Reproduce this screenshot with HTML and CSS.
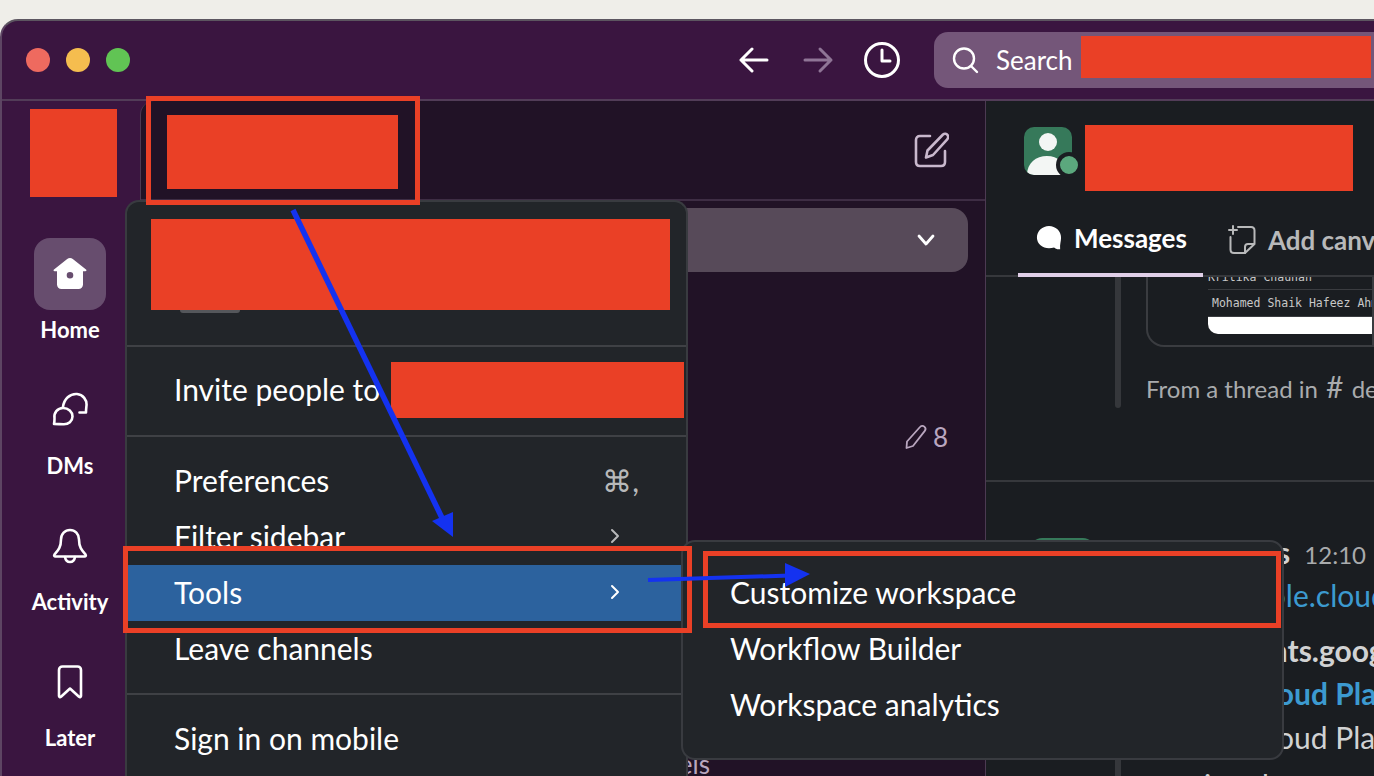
FILE: index.html

```html
<!DOCTYPE html>
<html lang="en">
<head>
  <meta charset="UTF-8">
  <title>Slack</title>
  <link rel="stylesheet" href="styles.css">
</head>
<body>

<div class="window">

  <header class="titlebar">
    <div class="lights">
      <span class="light red"></span>
      <span class="light yellow"></span>
      <span class="light green"></span>
    </div>
    <nav class="history">
      <svg width="32" height="32" viewBox="0 0 32 32" fill="none" stroke="#fff" stroke-width="3" stroke-linecap="round" stroke-linejoin="round"><path d="M3 16h26M14 5 3 16l11 11"/></svg>
      <svg width="32" height="32" viewBox="0 0 32 32" fill="none" stroke="#8f7596" stroke-width="3" stroke-linecap="round" stroke-linejoin="round"><path d="M3 16h26M18 5l11 11-11 11"/></svg>
      <svg class="clock" width="36" height="36" viewBox="0 0 36 36" fill="none" stroke="#fff" stroke-width="3" stroke-linecap="round" stroke-linejoin="round"><circle cx="18" cy="18" r="16.5"/><path d="M18 8v11h8"/></svg>
    </nav>
    <div class="search">
      <svg width="28" height="28" viewBox="0 0 28 28" fill="none" stroke="#fff" stroke-width="2.4" stroke-linecap="round"><circle cx="13" cy="12.5" r="10"/><path d="m20 20 6 6"/></svg>
      <span class="search-label">Search</span>
      <div class="redact search-redact"></div>
    </div>
  </header>

  <div class="content">

    <aside class="rail">
      <div class="redact rail-logo"></div>
      <div class="rail-item">
        <div class="rail-icon active">
          <svg width="36" height="36" viewBox="0 0 36 36"><path fill="#fff" fill-rule="evenodd" d="M18 2c1 0 2 .4 2.800 1L34 13.500c.9.700.4 1.800-.7 1.800H31v13.200c0 2.600-1.900 4.500-4.500 4.500h-17C6.900 33 5 31.100 5 28.500V15.300H2.700c-1.100 0-1.600-1.100-.7-1.800L15.200 3c.8-.6 1.800-1 2.800-1Zm0 14a3.300 3.300 0 1 0 0 6.600 3.300 3.300 0 0 0 0-6.600Z"/></svg>
        </div>
        <span class="rail-label">Home</span>
      </div>
      <div class="rail-item">
        <div class="rail-icon">
          <svg width="36" height="36" viewBox="0 0 36 36" fill="none" stroke="#fff" stroke-width="2.600" stroke-linecap="round" stroke-linejoin="round"><path d="M11 15C12 7 18 1.500 25 2c6 .5 10 6 9.500 11.500-.2 2-.5 4-.5 7h-6.500"/><path d="M2 32c.5-2 .5-3.500.5-5.500C1.500 21 5.500 16 11 16s9.500 4 9.500 8.500-4 8-9 7.800c-3 0-6-.3-9.500-.3Z"/></svg>
        </div>
        <span class="rail-label">DMs</span>
      </div>
      <div class="rail-item">
        <div class="rail-icon">
          <svg width="36" height="36" viewBox="0 0 36 36" fill="none" stroke="#fff" stroke-width="2.600" stroke-linecap="round" stroke-linejoin="round"><path d="M18 2c-5 0-9 4-9 9.500 0 8-3 11-6.500 15-.8 1-.2 2 1 2h29c1.200 0 1.800-1 1-2C30 22.500 27 19.500 27 11.500 27 6 23 2 18 2Z"/><path d="M13 29c.5 3 2.500 5 5 5s4.500-2 5-5"/></svg>
        </div>
        <span class="rail-label">Activity</span>
      </div>
      <div class="rail-item">
        <div class="rail-icon">
          <svg width="36" height="36" viewBox="0 0 36 36" fill="none" stroke="#fff" stroke-width="2.600" stroke-linecap="round" stroke-linejoin="round"><path d="M7 6c0-2 1.500-3.500 3.500-3.500h15C27.500 2.500 29 4 29 6v26c0 1-1 1.500-2 .8L18 24.500 9 32.800c-1 .7-2 .2-2-.8V6Z"/></svg>
        </div>
        <span class="rail-label">Later</span>
      </div>
    </aside>

    <section class="sidebar">
      <div class="side-head">
        <svg width="36" height="36" viewBox="0 0 36 36" fill="none" stroke="#c9b8cd" stroke-width="2.600" stroke-linecap="round" stroke-linejoin="round"><path d="M17 4H7C4.500 4 3 5.500 3 8v22c0 2.500 1.500 4 4 4h21c2.500 0 4-1.500 4-4V19"/><path d="M30 2.500c1.500-1.200 3.500-.8 4.500.6s.8 3-.3 4.200L20 23l-7 2.500 1.500-7L30 2.500Z"/></svg>
      </div>
      <div class="side-pill">
        <svg width="18" height="12" viewBox="0 0 18 12" fill="none" stroke="#fff" stroke-width="2.800" stroke-linecap="round" stroke-linejoin="round"><path d="m2 2 7 8 7-8"/></svg>
      </div>
      <div class="draft-row">
        <svg width="26" height="26" viewBox="0 0 26 26" fill="none" stroke="#b9a6bf" stroke-width="1.800" stroke-linecap="round" stroke-linejoin="round"><path d="M17 3c1-1.300 3-1.500 4.300-.4s1.500 3 .5 4.300L10 22l-6.500 2L4 17.500 17 3Z"/></svg>
        <span>8</span>
      </div>
      <div class="side-foot">All channels</div>
    </section>

    <main class="channel">
      <div class="channel-head">
        <div class="channel-avatar">
          <svg width="48" height="48" viewBox="0 0 48 48"><circle cx="24" cy="15" r="9" fill="#f3f6f4"/><path fill="#f3f6f4" d="M3 48c0-12 9-19 20-19s18 7 20 19Z"/></svg>
          <span class="status"></span>
        </div>
        <div class="redact channel-redact"></div>
      </div>
      <div class="tabs">
        <div class="tab on">
          <svg width="26" height="28" viewBox="0 0 28 28"><path fill="#fff" d="M14 1c7 0 13 5.500 13 12.500 0 4-1.500 7.500-1 12.500-3 .5-5-.6-6.500-1.800-1.700.6-3.500.8-5.500.8-7 0-13-4.500-13-11.500S7 1 14 1Z"/></svg>
          Messages
        </div>
        <div class="tab">
          <svg width="28" height="30" viewBox="0 0 28 30" fill="none" stroke="#b8b9ba" stroke-width="2" stroke-linecap="round" stroke-linejoin="round"><path d="M10 2h13c2 0 3.500 1.500 3.500 3.500V19L17 28H6c-2 0-3.500-1.500-3.500-3.500V12"/><path d="M26 19h-6c-2 0-3 1-3 3v6M5 1v8M1 5h8"/></svg>
          Add canvas
        </div>
      </div>

      <div class="thread">
        <div class="file-card">
          <div class="sheet">
            <div class="sheet-row first">Kritika Chauhan</div>
            <div class="sheet-row">Mohamed Shaik Hafeez Ahmed</div>
            <div class="sheet-end"></div>
          </div>
        </div>
        <p class="thread-from">From a thread in <span class="hash">#</span> dev</p>
      </div>

      <div class="message">
        <div class="msg-side">
          <div class="msg-avatar"></div>
          <div class="msg-bar"></div>
        </div>
        <div class="msg-body">
          <p class="msg-line m-name"><b>s</b> <span class="time">12:10</span></p>
          <p class="msg-line m-link">console.cloud.google.com</p>
          <p class="msg-line m-bold">accounts.google.com</p>
          <p class="msg-line m-title">Google Cloud Platform</p>
          <p class="msg-line m-plain">Google Cloud Platform</p>
          <p class="msg-line m-last">ing th</p>
        </div>
      </div>
    </main>

  </div>

  <!-- workspace menu -->
  <div class="menu main-menu">
    <div class="menu-top">
      <div class="redact top-redact"></div>
      <div class="top-chip"></div>
    </div>
    <div class="menu-group invite">
      <div class="menu-row">Invite people to</div>
      <div class="redact invite-redact"></div>
    </div>
    <div class="menu-group">
      <div class="menu-row">Preferences <span class="hint">⌘,</span></div>
      <div class="menu-row">Filter sidebar <svg class="caret" width="10" height="16" viewBox="0 0 10 16" fill="none" stroke="#b8b9ba" stroke-width="2" stroke-linecap="round" stroke-linejoin="round"><path d="m2 2 6 6-6 6"/></svg></div>
      <div class="menu-row selected">Tools <svg class="caret" width="10" height="16" viewBox="0 0 10 16" fill="none" stroke="#fff" stroke-width="2" stroke-linecap="round" stroke-linejoin="round"><path d="m2 2 6 6-6 6"/></svg></div>
      <div class="menu-row">Leave channels</div>
    </div>
    <div class="menu-group last">
      <div class="menu-row">Sign in on mobile</div>
    </div>
  </div>

  <!-- tools submenu -->
  <div class="menu sub-menu">
    <div class="menu-row">Customize workspace</div>
    <div class="menu-row">Workflow Builder</div>
    <div class="menu-row">Workspace analytics</div>
  </div>

  <!-- annotations drawn on the screenshot -->
  <div class="mark mark-head"><div class="redact head-redact"></div></div>
  <div class="mark mark-tools"></div>
  <div class="mark mark-custom"></div>
  <svg class="arrows" width="1374" height="776" viewBox="0 0 1374 776">
    <path d="M293 210 444 522" fill="none" stroke="#1432f0" stroke-width="5.500"/>
    <path d="M453 537 432 521 453 512Z" fill="#1432f0"/>
    <path d="M648 580 790 575.500" fill="none" stroke="#1432f0" stroke-width="4"/>
    <path d="M810 574 785 563 785 587Z" fill="#1432f0"/>
  </svg>
</div>

</body>
</html>
```

FILE: styles.css

```css
html, body { margin: 0; height: 776px; overflow: hidden; }
body { background: #efeee9; font-family: "Lato", "Open Sans", sans-serif; padding-top: 19px; box-sizing: border-box; }
p { margin: 0; }
.redact { background: #ea4026; }

.window { height: 757px; background: #3a1540; border-top: 2px solid #5c5560; border-left: 2px solid #5d4563; border-top-left-radius: 18px; overflow: hidden; display: flex; flex-direction: column; }

/* title bar */
.titlebar { height: 78px; flex: none; display: flex; align-items: center; border-bottom: 2px solid #523c58; box-sizing: content-box; }
.lights { display: flex; gap: 16px; margin-left: 24px; }
.light { width: 24px; height: 24px; border-radius: 50%; }
.light.red { background: #ee6a5f; }
.light.yellow { background: #f5bd4f; }
.light.green { background: #61c454; }
.history { display: flex; align-items: center; gap: 32px; margin-left: 608px; }
.clock { margin-left: -2px; }
.search { width: 440px; height: 56px; margin-left: 34px; background: #745679; border-radius: 14px 0 0 14px; display: flex; align-items: center; color: #fff; flex: none; }
.search svg { margin-left: 17px; }
.search-label { font-size: 26px; margin-left: 17px; }
.search-redact { width: 290px; height: 42px; margin: -6px 0 0 8px; }

.content { flex: 1; display: flex; min-height: 0; }

/* left rail */
.rail { width: 138px; flex: none; }
.rail-logo { width: 87px; height: 88px; margin: 8px 0 41px 28px; }
.rail-item { height: 136px; width: 136px; display: flex; flex-direction: column; align-items: center; color: #fff; }
.rail-icon { width: 72px; height: 72px; border-radius: 16px; display: flex; align-items: center; justify-content: center; }
.rail-icon.active { background: #674d6e; }
.rail-label { font-size: 22px; font-weight: 700; line-height: 24px; margin-top: 8px; }

/* channel list */
.sidebar { width: 844px; flex: none; background: #211226; border-top-left-radius: 14px; border-left: 1px solid #4c3a52; border-right: 1px solid #4c3a52; color: #b9a6bf; }
.side-head { height: 98px; border-bottom: 2px solid #3e2d44; display: flex; align-items: center; justify-content: flex-end; padding-right: 36px; }
.side-pill { height: 64px; margin: 7px 17px 0 0; background: #574a59; border-radius: 0 16px 16px 0; display: flex; align-items: center; justify-content: flex-end; padding-right: 33px; }
.draft-row { margin-top: 149px; display: flex; justify-content: flex-end; align-items: center; gap: 4px; padding-right: 37px; font-size: 26px; line-height: 32px; }
.side-foot { margin-top: 295px; padding-right: 275px; text-align: right; font-size: 26px; line-height: 32px; }

/* conversation */
.channel { flex: 1; min-width: 0; background: #1a1d21; color: #d1d2d3; overflow: hidden; }
.channel-head { display: flex; padding: 24px 0 0 38px; gap: 13px; }
.channel-avatar { width: 48px; height: 48px; margin-top: 2px; background: #36795a; border-radius: 10px; position: relative; overflow: visible; }
.channel-avatar svg { display: block; border-radius: 10px; }
.status { position: absolute; right: -10px; bottom: -3px; width: 18px; height: 18px; background: #5ba87d; border: 4px solid #1a1d21; border-radius: 50%; }
.channel-redact { width: 268px; height: 66px; }
.tabs { height: 68px; margin-top: 18px; display: flex; border-bottom: 2px solid #36383c; box-sizing: border-box; padding-left: 32px; gap: 7px; }
.tab { height: 68px; box-sizing: border-box; padding: 0 16px 6px 18px; display: flex; align-items: center; gap: 12px; font-size: 26px; font-weight: 700; color: #b8b9ba; white-space: nowrap; }
.tab.on { color: #fff; border-bottom: 4px solid #e0cfe8; }

.thread { height: 203px; margin-left: 129px; position: relative; }
.thread::before { content: ""; display: block; position: absolute; left: 0; top: 0; width: 6px; height: 131px; background: #35373b; border-radius: 0 0 3px 3px; }
.file-card { margin-left: 31px; height: 70px; border: 2px solid #3a3c40; border-top: 0; border-radius: 0 0 0 18px; box-sizing: border-box; padding-left: 60px; overflow: hidden; }
.sheet { font-family: "DejaVu Sans Mono", monospace; font-size: 11.500px; color: #c8c8c8; white-space: nowrap; margin-top: -2px; }
.sheet-row { height: 26px; line-height: 26px; padding-left: 4px; border-bottom: 1px solid #3a3c40; }
.sheet-row.first { height: 14px; line-height: 4px; padding-left: 0; overflow: hidden; }
.sheet-end { height: 17px; background: #fff; border-radius: 0 0 0 10px; }
.thread-from { margin: 25px 0 0 31px; font-size: 24px; line-height: 34px; color: #a9abad; white-space: nowrap; }
.hash { font-size: 30px; line-height: 24px; margin: 0 2px; }

.message { border-top: 2px solid #36383c; padding: 56px 0 0 44px; display: flex; }
.msg-side { width: 103px; flex: none; }
.msg-avatar { width: 65px; height: 60px; background: #36795a; border-radius: 12px; }
.msg-bar { width: 6px; height: 40px; margin: 160px 0 0 85px; background: #35373b; }
.msg-body { white-space: nowrap; font-size: 30px; margin-top: -4px; }
.msg-line { line-height: 44px; }
.m-name { font-size: 24px; line-height: 36px; margin-left: 144px; }
.m-name b { font-size: 30px; color: #d1d2d3; }
.time { color: #a9abad; margin-left: 8px; }
.m-link { color: #3c9ad0; margin-left: 75px; }
.m-bold { font-weight: 700; margin-top: 11px; margin-left: 60px; }
.m-title { font-weight: 700; color: #3c9ad0; margin-top: -1px; margin-left: 14px; }
.m-plain { margin-left: 15px; }
.m-last { margin-left: 71px; margin-top: 4px; }

/* menus */
.menu { position: absolute; background: #222529; border: 2px solid #393b40; border-radius: 14px; color: #fff; font-size: 30px; box-sizing: border-box; }
.main-menu { left: 125px; top: 200px; width: 563px; height: 576px; border-bottom: 0; border-radius: 14px 14px 0 0; }
.sub-menu { left: 681px; top: 540px; width: 603px; height: 220px; padding-top: 23px; }
.menu-row { height: 56px; box-sizing: border-box; padding: 0 47px 2px; display: flex; align-items: center; justify-content: space-between; white-space: nowrap; }
.menu-top { height: 126px; border-bottom: 2px solid #3f4145; padding: 17px 0 0 24px; box-sizing: content-box; }
.top-redact { width: 519px; height: 91px; }
.top-chip { width: 60px; height: 3px; margin-left: 29px; background: #55575b; border-radius: 0 0 8px 8px; }
.menu-group { border-bottom: 2px solid #3f4145; padding: 16px 0; position: relative; }
.menu-group.invite { padding: 15px 0 17px; }
.menu-group.last { border-bottom: 0; }
.invite-redact { position: absolute; left: 264px; top: 15px; width: 293px; height: 56px; }
.hint { color: #b8b9ba; font-size: 30px; line-height: 30px; }
.caret { margin-right: 19px; }
.selected { background: #2c629e; }

/* red boxes and blue arrows added on top of the screenshot */
.mark { position: absolute; border: 5px solid #ea4026; box-sizing: border-box; }
.mark-head { left: 146px; top: 96px; width: 274px; height: 109px; padding: 14px 0 0 16px; }
.head-redact { width: 231px; height: 74px; }
.mark-tools { left: 123px; top: 546px; width: 569px; height: 87px; }
.mark-custom { left: 703px; top: 551px; width: 578px; height: 77px; }
.arrows { position: absolute; left: 0; top: 0; }
```
